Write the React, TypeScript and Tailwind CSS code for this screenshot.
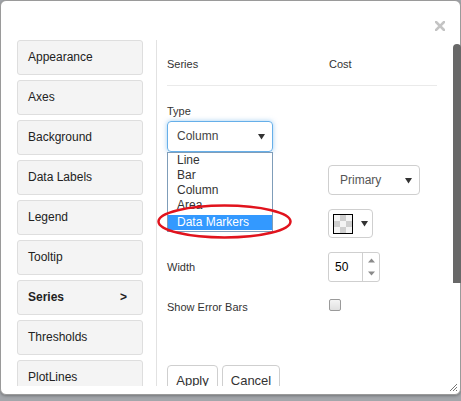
import React from "react";

const navItems = [
  "Appearance",
  "Axes",
  "Background",
  "Data Labels",
  "Legend",
  "Tooltip",
  "Series",
  "Thresholds",
  "PlotLines",
];

function Caret({ color = "#333" }: { color?: string }) {
  return (
    <svg width="7" height="7" viewBox="0 0 7 7">
      <path d="M0 1 L7 1 L3.5 6.5 Z" fill={color} />
    </svg>
  );
}

export default function App() {
  return (
    <div className="relative w-[461px] h-[401px] overflow-hidden bg-[#a3a6ab] font-['Liberation_Sans',Arial,sans-serif] text-[#222]">
      <div className="relative flex flex-col w-[461px] h-[395px] bg-white border border-[#9a9a9a] rounded-[6px] shadow-[0_1px_3px_rgba(0,0,0,0.3)]">
        {/* header */}
        <div className="flex h-[39px] shrink-0 justify-end items-start pt-[20px] pr-[15px]">
          <svg width="10" height="10" viewBox="0 0 10 10">
            <path d="M1 1 L9 9 M9 1 L1 9" stroke="#c4c4c4" strokeWidth="2.6" strokeLinecap="square" />
          </svg>
        </div>
        {/* body */}
        <div className="flex h-[346px] shrink-0 overflow-hidden">
          <div className="flex flex-col gap-[5px] pl-[16px] pr-[13px] w-[155px] shrink-0">
            {navItems.map((n) => (
              <div
                key={n}
                className={
                  "flex h-[35px] w-[126px] shrink-0 items-center justify-between pl-[10px] pr-[15px] pb-[1px] bg-[#f4f4f4] border border-[#dedede] rounded-[3px] text-[12px] " +
                  (n === "Series" ? "font-bold" : "")
                }
              >
                <span>{n}</span>
                {n === "Series" && <span>&gt;</span>}
              </div>
            ))}
          </div>
          <div className="relative flex-1 border-l border-[#e2e2e2] pl-[10px] text-[11px] leading-[13px] text-[#333]">
            <div className="flex pt-[18px] h-[31px]">
              <div className="w-[162px]">Series</div>
              <div>Cost</div>
            </div>
            <div className="mt-[14px] w-[270px] border-t border-[#eaeaea]" />
            <div className="mt-[19px] h-[13px]">Type</div>
            <div className="mt-[3px] flex items-center justify-between w-[106px] h-[31px] pl-[9px] pr-[7px] border border-[#66afe9] rounded-[4px] shadow-[0_0_5px_rgba(102,175,233,0.6)] text-[12px] text-[#444]">
              <span>Column</span>
              <Caret />
            </div>
            {/* row 1 */}
            <div className="mt-[13px] flex items-center h-[30px]">
              <div className="w-[161px]" />
              <div className="flex items-center justify-between w-[92px] h-[30px] pl-[11px] pr-[7px] border border-[#cfcfcf] rounded-[4px] text-[12px] text-[#555]">
                <span>Primary</span>
                <Caret />
              </div>
            </div>
            {/* row 2 */}
            <div className="mt-[14px] flex items-center h-[29px]">
              <div className="w-[161px]" />
              <div className="flex items-center gap-[8px] w-[45px] h-[29px] pl-[4px] border border-[#cfcfcf] rounded-[4px]">
                <div className="w-[20px] h-[20px] border border-black bg-[conic-gradient(#cfcfcf_25%,#f4f4f4_0_50%,#cfcfcf_0_75%,#f4f4f4_0)] bg-[length:12px_12px]" />
                <Caret />
              </div>
            </div>
            {/* row 3 */}
            <div className="mt-[14px] flex items-center h-[30px]">
              <div className="w-[161px]">Width</div>
              <div className="flex w-[52px] h-[30px] border border-[#cfcfcf] rounded-[3px]">
                <div className="flex-1 flex items-center pl-[6px] text-[12px] text-black">50</div>
                <div className="flex flex-col items-center justify-between w-[17px] border-l border-[#cfcfcf] py-[5px]">
                  <svg width="7" height="5" viewBox="0 0 7 5">
                    <path d="M0 4.5 L7 4.5 L3.5 0.5 Z" fill="#8a8a8a" />
                  </svg>
                  <svg width="7" height="5" viewBox="0 0 7 5">
                    <path d="M0 0.5 L7 0.5 L3.5 4.5 Z" fill="#8a8a8a" />
                  </svg>
                </div>
              </div>
            </div>
            {/* row 4 */}
            <div className="mt-[17px] flex items-start h-[13px]">
              <div className="w-[162px] mt-[2px]">Show Error Bars</div>
              <div className="w-[12px] h-[12px] border border-[#9a9a9a] rounded-[2px] bg-[linear-gradient(#f4f4f4,#e0e0e0)]" />
            </div>
            <div className="mt-[53px] flex gap-[4px] text-[13px] text-[#333]">
              <div className="flex items-center justify-center w-[51px] h-[30px] border border-[#cfcfcf] rounded-[4px]">Apply</div>
              <div className="flex items-center justify-center w-[58px] h-[30px] border border-[#cfcfcf] rounded-[4px]">Cancel</div>
            </div>
            {/* open listbox */}
            <div className="absolute left-[10px] top-[112px] w-[106px] h-[80px] bg-white border border-[#7f9db9] text-[12px] leading-[15px] text-[#333]">
              <div className="h-[15px] pl-[9px]">Line</div>
              <div className="h-[15px] pl-[9px]">Bar</div>
              <div className="h-[15px] pl-[9px]">Column</div>
              <div className="h-[15px] pl-[9px]">Area</div>
              <div className="mt-[2px] h-[15px] pl-[9px] leading-[15px] bg-[#3399ff] text-white">Data Markers</div>
            </div>
          </div>
        </div>
        {/* scrollbar thumb */}
        <div className="absolute right-[-1px] top-[43px] w-[8px] h-[239px] bg-[#686868] rounded-t-[4px]" />
        {/* resize grip */}
        <svg className="absolute right-[2px] bottom-[2px]" width="9" height="9" viewBox="0 0 9 9">
          <path d="M8 1 L1 8 M8 4 L4 8 M8 7 L7 8" stroke="#777" strokeWidth="1" />
        </svg>
      </div>
      {/* red annotation ellipse */}
      <svg className="absolute left-0 top-0 pointer-events-none" width="461" height="401">
        <ellipse cx="224.5" cy="221.5" rx="66" ry="16" fill="none" stroke="#e1131d" strokeWidth="2.5" />
      </svg>
    </div>
  );
}
